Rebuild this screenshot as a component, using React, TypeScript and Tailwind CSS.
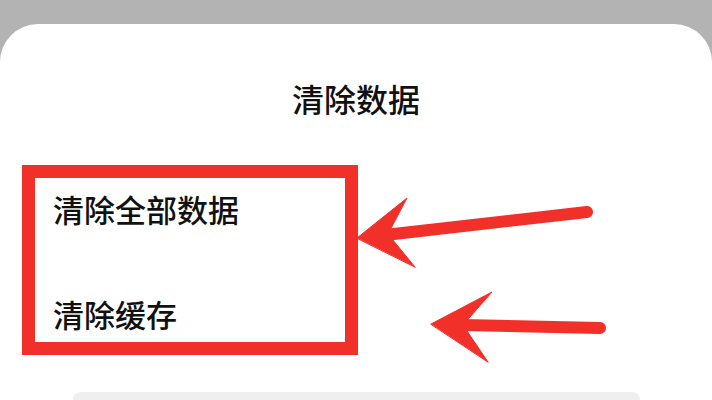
import React from "react";

const font = { fontFamily: '"Noto Sans CJK SC", "Noto Sans", sans-serif' };

export default function App() {
    return (
        <div
            className="relative w-[712px] h-[400px] overflow-hidden bg-[#b3b3b3] pt-[24px]"
            style={font}
        >
            {/* Sheet */}
            <div className="h-[376px] bg-white rounded-t-[38px] flex flex-col">
                <h1 className="pt-[54px] text-center text-[32px] leading-[40px] font-medium text-[#111]">
                    清除数据
                </h1>
                <div className="flex flex-col pl-[53px] mt-[71px] gap-[65px]">
                    <div className="text-[31px] leading-[40px] font-medium text-[#111]">
                        清除全部数据
                    </div>
                    <div className="text-[31px] leading-[40px] font-medium text-[#111]">
                        清除缓存
                    </div>
                </div>
                <div className="mt-auto ml-[73px] w-[567px] h-[8px] rounded-t-[24px] bg-[#efefef]" />
            </div>

            {/* Annotations */}
            <div className="absolute left-[22px] top-[165px] w-[336px] h-[190px] border-[13px] border-[#f2302a]" />
            <svg
                className="absolute inset-0 pointer-events-none"
                width="712"
                height="400"
                viewBox="0 0 712 400"
            >
                <g fill="#f2302a" stroke="#f2302a" strokeLinecap="round">
                    <line x1="587" y1="212" x2="385" y2="235" strokeWidth="12" />
                    <polygon points="357,238 407,198 388,234 415,267" strokeWidth="1" />
                    <line x1="600" y1="328" x2="462" y2="325" strokeWidth="12" />
                    <polygon points="431,324 492,292 463,325 488,362" strokeWidth="1" />
                </g>
            </svg>
        </div>
    );
}
